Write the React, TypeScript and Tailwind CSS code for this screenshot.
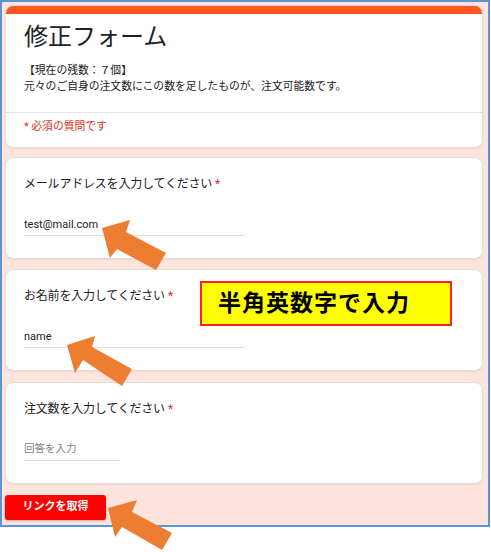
import React from 'react';

const font = { fontFamily: 'Roboto, "Noto Sans CJK JP", sans-serif' };

type QuestionProps = {
  label: string;
  value?: string;
  placeholder?: string;
  inputWidth: string;
  className?: string;
};

const Question: React.FC<QuestionProps> = ({ label, value, placeholder, inputWidth, className }) => (
  <div
    className={`bg-white rounded-lg border border-[#e3dcda] shadow-[0_1px_2px_rgba(0,0,0,0.06)] pt-[18px] pl-[18px] pb-[22px] ${className ?? ''}`}
  >
    <div className="text-[12px] leading-4 text-[#202124] tracking-[-0.2px]">
      {label}
      <span className="text-[#d93025] ml-[3px]">*</span>
    </div>
    {value ? (
      <div className={`mt-[25px] h-[19px] border-b border-[#e0e0e0] text-[11px] leading-4 text-[#202124] ${inputWidth}`}>
        {value}
      </div>
    ) : (
      <div className={`mt-[24px] h-[20px] border-b border-[#e0e0e0] text-[10.5px] leading-4 text-[#80868b] ${inputWidth}`}>
        {placeholder}
      </div>
    )}
  </div>
);

// orange block arrows pointing up-left at each field
const arrows = [
  '102,228 130,220 126,232 166,253 156,270 117,249 110,258',
  '67,345 95,336 92,347 132,369 122,386 83,360 75,373',
  '108,508 137,500 132,512 172,533 162,550 122,527 115,537',
];

export default function App() {
  return (
    <div className="relative w-[491px] h-[552px] bg-white overflow-hidden" style={font}>
      <div className="w-[490px] h-[527px] border-2 border-[#5b93d3] bg-[#fde4dd] pt-[3px] pl-[3px] pr-[5px]">
        {/* form header */}
        <div className="bg-white rounded-lg overflow-hidden border border-[#e3dcda] shadow-[0_1px_2px_rgba(0,0,0,0.06)]">
          <div className="h-2 bg-[#ff5722]" />
          <div className="pl-[18px] pt-[7px] pb-[17px] border-b border-[#e0e0e0]">
            <h1 className="text-[24px] leading-8 text-[#202124]">修正フォーム</h1>
            <p className="mt-[10px] text-[10.8px] leading-4 text-[#202124]">【現在の残数：７個】</p>
            <p className="text-[10.8px] leading-4 text-[#202124]">
              元々のご自身の注文数にこの数を足したものが、注文可能数です。
            </p>
          </div>
          <div className="pl-[18px] pt-[6px] pb-[12px] text-[10.8px] leading-4 text-[#d93025]">* 必須の質問です</div>
        </div>

        <Question
          className="mt-[9px]"
          label="メールアドレスを入力してください"
          value="test@mail.com"
          inputWidth="w-[221px]"
        />
        <Question className="mt-[10px]" label="お名前を入力してください" value="name" inputWidth="w-[221px]" />
        <Question className="mt-[11px]" label="注文数を入力してください" placeholder="回答を入力" inputWidth="w-[96px]" />

        <button className="mt-[11px] w-[101px] h-[25px] rounded-[3px] bg-[#ff0000] shadow-[0_1px_2px_rgba(0,0,0,0.25)] text-white text-[11px] font-bold">
          リンクを取得
        </button>
      </div>

      {/* callout note */}
      <div className="absolute left-[200px] top-[281px] w-[252px] h-[45px] bg-[#ffff00] border-2 border-[#f22] flex items-center pl-[16px]">
        <span className="text-[23px] font-bold text-black tracking-[1px] leading-none">半角英数字で入力</span>
      </div>

      <svg className="absolute inset-0 pointer-events-none" width="491" height="552" viewBox="0 0 491 552">
        {arrows.map((pts) => (
          <polygon key={pts} points={pts} fill="#ed7d31" />
        ))}
      </svg>
    </div>
  );
}
